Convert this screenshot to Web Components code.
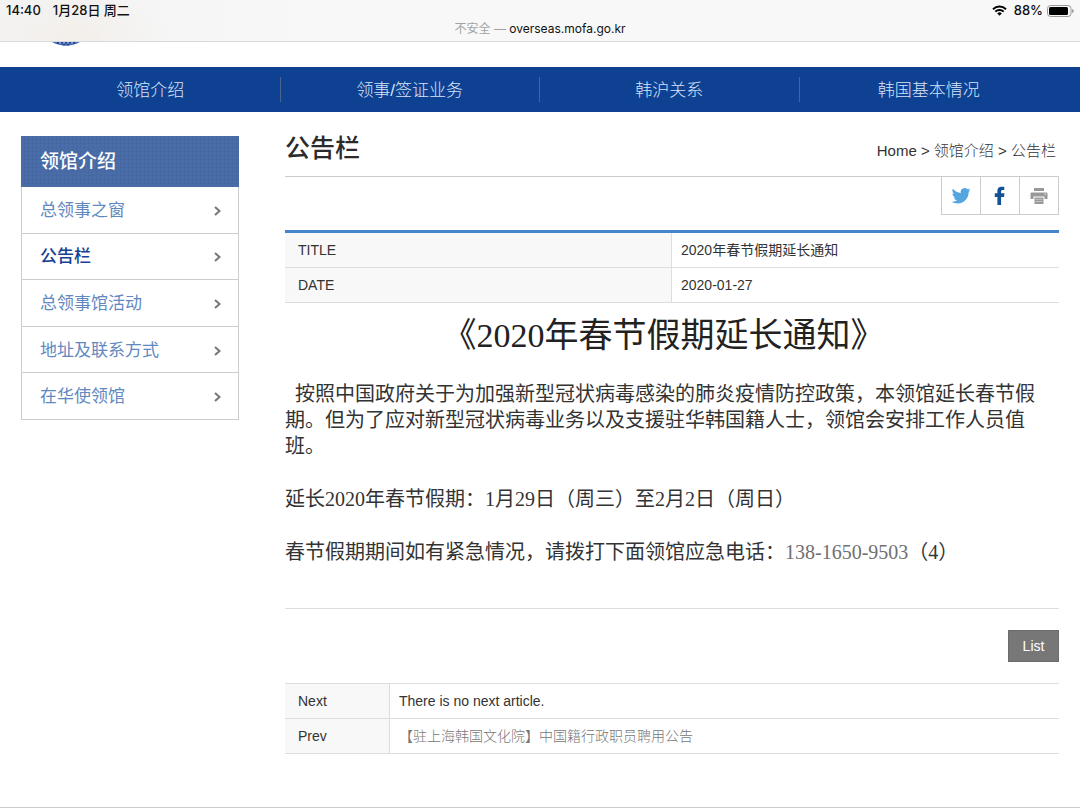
<!DOCTYPE html>
<html lang="zh-CN">
<head>
<meta charset="utf-8">
<meta name="viewport" content="width=device-width, initial-scale=1">
<title>公告栏</title>
<style>
  html, body { margin: 0; }
  body {
    background: #fff;
    color: #333;
    font-family: "Liberation Sans", "Noto Sans CJK SC", sans-serif;
    font-size: 14px;
  }
</style>
</head>
<body>
<consulate-page></consulate-page>

<script>
const define = (name, html) => {
  const template = document.createElement('template');
  template.innerHTML = html;
  customElements.define(name, class extends HTMLElement {
    constructor() {
      super();
      this.attachShadow({ mode: 'open' }).append(template.content.cloneNode(true));
    }
  });
};

/* Tablet status line and collapsed address bar */
define('browser-bar', `
<style>
  :host {
    display: block; box-sizing: border-box; height: 42px;
    border-bottom: 1px solid #dadada;
    background: radial-gradient(ellipse 90px 60px at 75px 40px, #f3efea, transparent), linear-gradient(90deg, #f3f3f3, #f8f8f8 30%);
    font-family: Inter, "Noto Sans CJK SC", sans-serif;
    color: #111;
  }
  .status { display: flex; justify-content: space-between; padding: 0 6px; font-size: 13px; font-weight: 500; line-height: 21px; }
  .group { display: flex; align-items: center; }
  .left { gap: 12px; }
  .right { gap: 7px; }
  .power { display: flex; align-items: center; gap: 4px; }
  svg { display: block; }
  .address { text-align: center; font-size: 12px; line-height: 15px; color: #111; }
  .address span { color: #a3a3a3; }
</style>
<div class="status">
  <div class="group left"><span>14:40</span><span>1月28日 周二</span></div>
  <div class="group right">
    <svg width="15" height="11" viewBox="0 0 15 11" fill="none" stroke="#000" stroke-width="2">
      <path d="M1 4.2a9.4 9.4 0 0 1 13 0M3.3 6.6a6 6 0 0 1 8.4 0"/><path d="M7.5 10.8 5.2 8.4a3.4 3.4 0 0 1 4.6 0z" fill="#000" stroke="none"/>
    </svg>
    <div class="power"><span>88%</span>
    <svg width="27" height="12" viewBox="0 0 27 12">
      <rect x=".5" y=".5" width="23.5" height="11" rx="3" fill="none" stroke="#999"/>
      <rect x="2" y="2" width="19" height="8" rx="1.5" fill="#000"/>
      <path d="M25.2 4v4q1.500-.6 1.500-2t-1.500-2" fill="#888"/>
    </svg></div>
  </div>
</div>
<div class="address"><span>不安全 — </span>overseas.mofa.go.kr</div>
`);

/* Lower edge of the emblem left visible beneath the bar */
define('brand-strip', `
<style>
  :host { display: block; height: 25px; padding-left: 51px; }
  svg { display: block; }
</style>
<svg width="30" height="4" viewBox="0 0 30 4" aria-hidden="true">
  <path d="M1 0h28Q15 7.5 1 0z" fill="#4a70b8"/>
  <path d="M7 0v2M11 0v1.5M13 2v1.5M15 0v1.6M17 2v1.5M19 0v1.5M23 0v2" stroke="#16347e" stroke-width="1.4"/>
  <path d="M9 0v1.6M13 0v1.4M17 0v1.4M21 0v1.6" stroke="#b9cbea"/>
</svg>
`);

define('main-nav', `
<style>
  :host { display: block; background: #0f4192; padding: 0 21px; }
  nav { display: grid; grid-template-columns: repeat(4, 1fr); align-items: center; height: 45px; }
  a { color: #d6e4fa; font-size: 17px; font-weight: 300; line-height: 23px; padding-top: 2px; text-align: center; text-decoration: none; border-right: 1px solid #4a6390; }
  a:last-child { border-right-color: transparent; }
</style>
<nav aria-label="主菜单">
  <a href="#about">领馆介绍</a><a href="#visa">领事/签证业务</a><a href="#relations">韩沪关系</a><a href="#korea">韩国基本情况</a>
</nav>
`);

define('side-link', `
<style>
  :host { display: grid; border-bottom: 1px solid #ccc; --ink: #6189bf; --weight: 400; }
  :host([current]) { --ink: #173f94; --weight: 500; }
  a { display: flex; align-items: center; justify-content: space-between; padding: 2px 17px 0 18px; color: var(--ink); font-weight: var(--weight); font-size: 17px; line-height: 24px; text-decoration: none; }
</style>
<a href="#section"><slot></slot>
  <svg width="8" height="10" viewBox="0 0 8 10" fill="none" stroke="#777" stroke-width="2"><path d="M2 1 6.500 5 2 9"/></svg>
</a>
`);

define('side-menu', `
<style>
  :host { display: block; }
  h2 {
    margin: 0; padding-left: 19px; color: #fff; font-size: 19px; font-weight: 500; line-height: 51px;
    background: repeating-linear-gradient(90deg, transparent 0 3px, #00000008 3px 4px), repeating-linear-gradient(transparent 0 3px, #00000008 3px 4px), #496da9;
  }
  nav { display: grid; grid-auto-rows: 1fr; min-height: 233px; border: solid #ccc; border-width: 0 1px; }
</style>
<h2>领馆介绍</h2>
<nav aria-label="领馆介绍">
  <side-link>总领事之窗</side-link>
  <side-link current>公告栏</side-link>
  <side-link>总领事馆活动</side-link>
  <side-link>地址及联系方式</side-link>
  <side-link>在华使领馆</side-link>
</nav>
`);

define('page-heading', `
<style>
  :host { display: flex; justify-content: space-between; align-items: flex-end; height: 64px; border-bottom: 1px solid #ccc; }
  h1 { margin: 0 0 10px; font-size: 25px; font-weight: 500; line-height: 36px; color: #2b2b2b; }
  nav { font-size: 15px; line-height: 22px; padding: 0 3px 14px 0; }
  a { color: #333; font-weight: 300; text-decoration: none; }
</style>
<h1>公告栏</h1>
<nav aria-label="当前位置"><a href="#home">Home</a> &gt; <a href="#about">领馆介绍</a> &gt; <a href="#notice">公告栏</a></nav>
`);

define('share-tools', `
<style>
  :host { display: flex; justify-content: flex-end; padding-bottom: 15px; }
  div { display: flex; border: 1px solid #ccc; border-top: 0; }
  a { display: grid; place-items: center; width: 38px; height: 37px; }
  a + a { border-left: 1px solid #ccc; }
  svg { display: block; }
</style>
<div>
  <a href="#twitter" aria-label="Twitter"><svg width="20" height="18" viewBox="0 0 24 22" fill="#55a5e0"><path d="M23.6 3.6c-.8.4-1.7.6-2.7.8.9-.6 1.7-1.5 2-2.6-.9.5-1.9.9-3 1.1a4.7 4.7 0 0 0-8.1 4.3C7.9 7 4.400 5.100 2.100 2.200c-1.300 2.200-.6 4.900 1.500 6.300-.8 0-1.500-.2-2.100-.6 0 2.300 1.600 4.300 3.800 4.700-.7.200-1.400.2-2.100.1.600 1.900 2.300 3.200 4.400 3.300a9.500 9.500 0 0 1-7 2c2.100 1.300 4.600 2.100 7.300 2.100 8.700 0 13.500-7.200 13.500-14 .8-.7 1.600-1.500 2.200-2.500z"/></svg></a>
  <a href="#facebook" aria-label="Facebook"><svg width="12" height="20" viewBox="0 0 12 20"><path d="M3.400 19V11H.8V7.300h2.600V4.800C3.400 2.200 5 .8 7.500.8c1.200 0 2.800.2 2.800.2v3.100H8.800C7.500 4.100 7.100 4.700 7.100 5.600v1.700h3.400L10 11H7.100v8z" fill="#155292"/></svg></a>
  <a href="#print" aria-label="Print"><svg width="18" height="18" viewBox="0 0 18 18" fill="#999"><path d="M4 1h10v3H4zM1.500 5.500h15q1 0 1 1V12h-3V9.500h-11V12h-3V6.500q0-1 1-1zM4.500 10.500h9V17h-9z"/><path d="M5.500 12.300h7M5.500 14.500h7" stroke="#d5d5d5" stroke-width=".7"/><path d="M14.500 7.200h1.500" stroke="#eee"/></svg></a>
</div>
`);

const tableStyle = `
  :host { display: block; }
  table { width: 100%; border-collapse: separate; border-spacing: 0; table-layout: fixed; color: #333; }
  th, td { height: 33px; padding: 0 9px 1px; border-bottom: 1px solid #ddd; font-size: 14px; font-weight: 400; line-height: 20px; text-align: left; }
  th { padding-left: 13px; background: #f8f8f8; border-right: 1px solid #ddd; box-sizing: content-box; }
`;

define('article-meta', `
<style>${tableStyle}
  table { border-top: 3px solid #4684cb; }
  col:first-child { width: 50%; }
</style>
<table>
  <colgroup><col><col></colgroup>
  <tr><th scope="row">TITLE</th><td>2020年春节假期延长通知</td></tr>
  <tr><th scope="row">DATE</th><td>2020-01-27</td></tr>
</table>
`);

define('article-body', `
<style>
  :host { display: block; padding-bottom: 43px; border-bottom: 1px solid #ddd; font-family: "Liberation Serif", "Noto Sans CJK SC", serif; font-size: 20px; line-height: 26px; color: #333; }
  h2 { margin: 8px 0 20px; font-size: 34px; font-weight: 400; line-height: 50px; text-align: center; color: #222; }
  p { margin: 0 0 27px; }
  p:last-child { margin-bottom: 0; }
  a { color: #707070; text-decoration: none; }
</style>
<h2>《2020年春节假期延长通知》&nbsp;&nbsp;</h2>
<p>&nbsp; 按照中国政府关于为加强新型冠状病毒感染的肺炎疫情防控政策，本领馆延长春节假期。但为了应对新型冠状病毒业务以及支援驻华韩国籍人士，领馆会安排工作人员值班。</p>
<p>延长2020年春节假期：1月29日（周三）至2月2日（周日）</p>
<p>春节假期期间如有紧急情况，请拨打下面领馆应急电话：<a href="tel:138-1650-9503">138-1650-9503</a>（4）</p>
`);

define('list-action', `
<style>
  :host { display: flex; justify-content: flex-end; padding: 21px 0; }
  button { width: 51px; height: 32px; padding: 0; border: 1px solid #6c6c6c; background: #777; color: #fff; font: 14px "Liberation Sans", sans-serif; }
</style>
<button type="button">List</button>
`);

define('article-pager', `
<style>${tableStyle}
  table { border-top: 1px solid #ddd; }
  .label { width: 105px; }
  a { color: #777; font-weight: 300; text-decoration: none; }
</style>
<table>
  <colgroup><col class="label"><col></colgroup>
  <tr><th scope="row">Next</th><td>There is no next article.</td></tr>
  <tr><th scope="row">Prev</th><td><a href="#prev">【驻上海韩国文化院】中国籍行政职员聘用公告</a></td></tr>
</table>
`);

define('consulate-page', `
<style>
  :host { display: flex; flex-direction: column; min-height: 100vh; }
  .columns { display: grid; grid-template-columns: 218px minmax(0, 1fr); gap: 46px; align-items: start; padding: 0 21px 53px; }
  side-menu { margin-top: 24px; }
  footer { flex: 1; border-top: 1px solid #ccc; }
</style>
<browser-bar></browser-bar>
<brand-strip></brand-strip>
<main-nav></main-nav>
<div class="columns">
  <side-menu></side-menu>
  <main>
    <page-heading></page-heading>
    <share-tools></share-tools>
    <article-meta></article-meta>
    <article-body></article-body>
    <list-action></list-action>
    <article-pager></article-pager>
  </main>
</div>
<footer></footer>
`);
</script>
</body>
</html>
